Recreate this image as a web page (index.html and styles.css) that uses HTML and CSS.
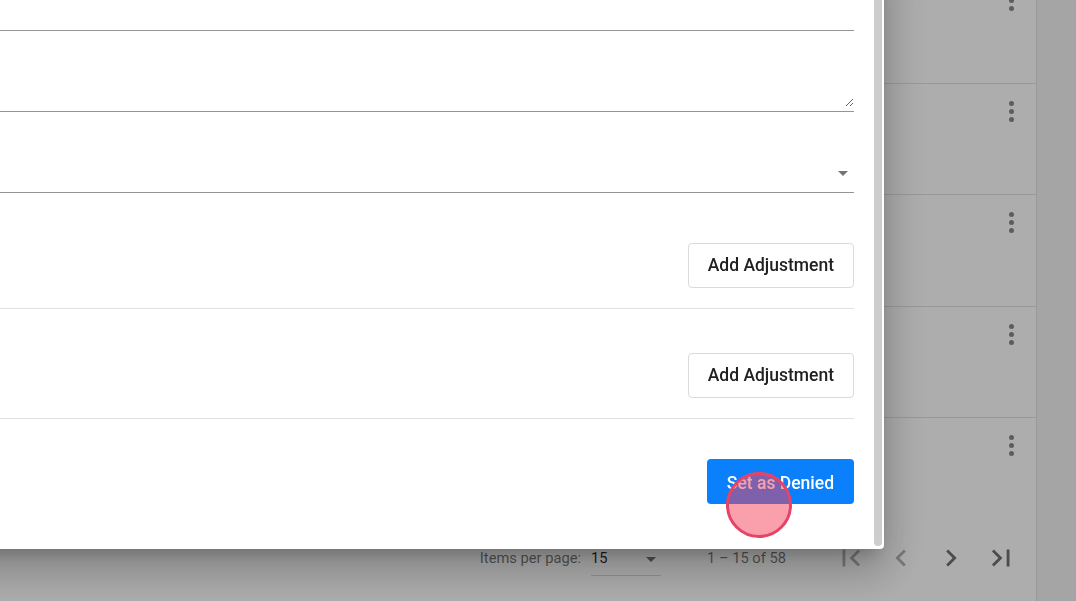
FILE: index.html
```html
<!DOCTYPE html>
<html lang="en">
<head>
<meta charset="utf-8">
<title>Claim review</title>
<link rel="stylesheet" href="styles.css">
</head>
<body>
<div class="page">
  <main class="main">
    <div class="table">
      <div class="row"><span class="kebab"><i></i><i></i><i></i></span></div>
      <div class="row"><span class="kebab"><i></i><i></i><i></i></span></div>
      <div class="row"><span class="kebab"><i></i><i></i><i></i></span></div>
      <div class="row"><span class="kebab"><i></i><i></i><i></i></span></div>
      <div class="row row-last"><span class="kebab"><i></i><i></i><i></i></span></div>
    </div>
    <div class="paginator">
      <span class="pg-label">Items per page:</span>
      <div class="pg-select"><span class="pg-value">15</span><span class="pg-arrow"></span></div>
      <span class="pg-range">1 – 15 of 58</span>
      <button class="pg-btn pg-disabled" aria-label="First page"><svg viewBox="0 0 24 24"><path d="M18.41 16.59L13.82 12l4.59-4.59L17 6l-6 6 6 6zM6 6h2v12H6z"/></svg></button>
      <button class="pg-btn pg-disabled" aria-label="Previous page"><svg viewBox="0 0 24 24"><path d="M15.41 7.41L14 6l-6 6 6 6 1.41-1.41L10.83 12z"/></svg></button>
      <button class="pg-btn" aria-label="Next page"><svg viewBox="0 0 24 24"><path d="M10 6L8.59 7.41 13.17 12l-4.58 4.59L10 18l6-6z"/></svg></button>
      <button class="pg-btn" aria-label="Last page"><svg viewBox="0 0 24 24"><path d="M5.59 7.41L10.18 12l-4.59 4.59L7 18l6-6-6-6zM16 6h2v12h-2z"/></svg></button>
    </div>
  </main>
  <aside class="side"></aside>
</div>

<div class="backdrop"></div>

<div class="dialog">
  <div class="dialog-body">
    <div class="field"></div>
    <div class="field field-area"><textarea class="area" aria-label="Notes"></textarea></div>
    <div class="field field-select"><span class="select-arrow"></span></div>
    <div class="section section-first"><button class="btn-outline">Add Adjustment</button></div>
    <div class="section"><button class="btn-outline">Add Adjustment</button></div>
    <div class="section section-last"><button class="btn-primary">Set as Denied</button></div>
  </div>
  <div class="scrollbar"></div>
</div>

<div class="click-marker"></div>
</body>
</html>
```

FILE: styles.css
```css
html, body {
  margin: 0;
  padding: 0;
  height: 100%;
  overflow: hidden;
}

body {
  font-family: Roboto, "Liberation Sans", Arial, sans-serif;
  background: #ffffff;
  color: #212121;
}

.page {
  display: flex;
  height: 100%;
}

.main {
  flex: 1;
  display: flex;
  flex-direction: column;
  background: #ffffff;
  min-width: 0;
}

.table {
  margin-top: -27.33px;
  display: flex;
  flex-direction: column;
}

.row {
  box-sizing: border-box;
  height: 111.33px;
  border-bottom: 1px solid #e1e1e1;
  display: flex;
  justify-content: flex-end;
  align-items: flex-start;
  padding: 17px 22px 0 0;
}

.row-last {
  border-bottom: none;
}

.kebab {
  display: flex;
  flex-direction: column;
  gap: 3px;
}

.kebab i {
  display: block;
  width: 5px;
  height: 5px;
  border-radius: 50%;
  background: #8a8a8a;
}

.paginator {
  height: 58px;
  display: flex;
  align-items: center;
  justify-content: flex-end;
  padding-right: 10px;
  font-size: 14.7px;
  color: rgba(0, 0, 0, 0.54);
}

.pg-label {
  margin-right: 10px;
}

.pg-select {
  box-sizing: border-box;
  width: 70px;
  height: 36px;
  display: flex;
  align-items: center;
  justify-content: space-between;
  border-bottom: 1px solid rgba(0, 0, 0, 0.16);
  color: rgba(0, 0, 0, 0.87);
  padding-right: 5px;
}

.pg-arrow {
  width: 0;
  height: 0;
  border-left: 5.5px solid transparent;
  border-right: 5.5px solid transparent;
  border-top: 5.5px solid rgba(0, 0, 0, 0.54);
  margin-top: 3px;
}

.pg-range {
  margin: 0 40px 0 46px;
}

.pg-btn {
  width: 50px;
  height: 50px;
  padding: 0;
  border: none;
  background: transparent;
  display: flex;
  align-items: center;
  justify-content: center;
  fill: rgba(0, 0, 0, 0.56);
}

.pg-btn svg {
  width: 34px;
  height: 34px;
  display: block;
}

.pg-disabled {
  fill: rgba(0, 0, 0, 0.3);
}

.side {
  width: 39px;
  border-left: 1px solid #e1e1e1;
  background: #f4f4f4;
}

.backdrop {
  position: fixed;
  inset: 0;
  background: rgba(0, 0, 0, 0.32);
}

.dialog {
  position: fixed;
  left: -316px;
  top: -50px;
  width: 1200px;
  height: 599px;
  box-sizing: border-box;
  background: #ffffff;
  border-radius: 4px;
  display: flex;
  box-shadow: 0 11px 15px -7px rgba(0, 0, 0, 0.2),
              0 24px 38px 3px rgba(0, 0, 0, 0.14),
              0 9px 46px 8px rgba(0, 0, 0, 0.12);
}

.dialog-body {
  flex: 1;
  display: flex;
  flex-direction: column;
  padding-right: 20px;
  min-width: 0;
}

.scrollbar {
  width: 8px;
  margin: 0 2px 3px 0;
  border-radius: 0 0 4px 4px;
  background: #cdcdcd;
}

.field {
  box-sizing: border-box;
  height: 81px;
  flex: none;
  border-bottom: 1px solid rgba(0, 0, 0, 0.42);
}

.field-area {
  display: flex;
  flex-direction: column;
  justify-content: flex-end;
  padding-bottom: 4px;
}

.area {
  display: block;
  box-sizing: border-box;
  width: 100%;
  height: 50px;
  border: none;
  outline: none;
  resize: vertical;
  padding: 0;
  margin: 0;
  background: transparent;
  font: inherit;
}

.field-select {
  display: flex;
  justify-content: flex-end;
  align-items: flex-end;
  padding: 0 6px 16px 0;
}

.select-arrow {
  width: 0;
  height: 0;
  border-left: 5px solid transparent;
  border-right: 5px solid transparent;
  border-top: 5px solid rgba(0, 0, 0, 0.54);
}

.section {
  flex: none;
  display: flex;
  justify-content: flex-end;
  padding: 44px 0 20px;
  border-bottom: 1px solid #e0e0e0;
}

.section-first {
  padding-top: 50px;
}

.section-last {
  padding: 40px 0 45px;
  border-bottom: none;
}

.btn-outline,
.btn-primary {
  box-sizing: border-box;
  height: 45px;
  padding: 0 19px;
  border-radius: 4px;
  font-family: Roboto, "Liberation Sans", Arial, sans-serif;
  font-size: 17.5px;
  font-weight: 500;
  line-height: 1;
}

.btn-outline {
  border: 1px solid #dadada;
  background: #ffffff;
  color: #212121;
}

.btn-primary {
  border: none;
  padding: 4px 20px 0;
  background: #0a80fc;
  color: #ffffff;
}

.click-marker {
  position: fixed;
  left: 726px;
  top: 472px;
  width: 66px;
  height: 66px;
  box-sizing: border-box;
  border-radius: 50%;
  border: 3px solid #e64466;
  background: rgba(243, 65, 89, 0.5);
}
```
